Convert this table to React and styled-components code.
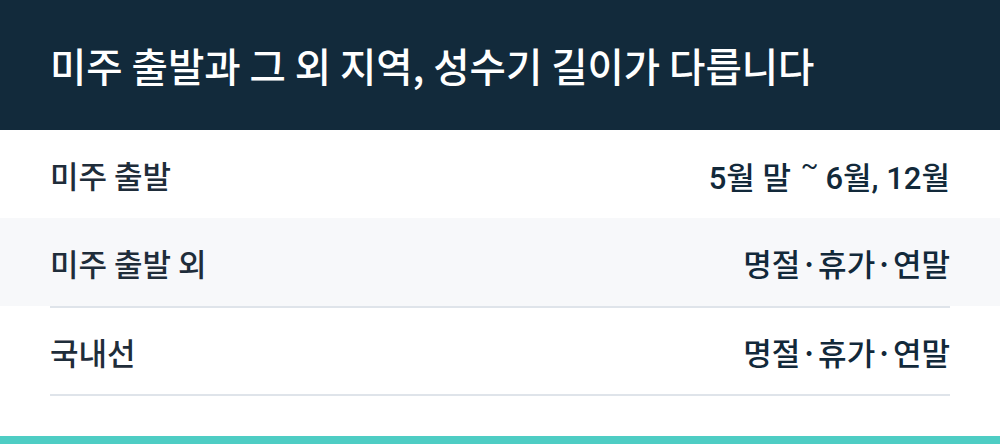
import React from "react";
import styled, { createGlobalStyle } from "styled-components";

const Global = createGlobalStyle`
  html, body { margin: 0; padding: 0; background: #ffffff; }
  body { font-family: "Noto Sans CJK KR", "Noto Sans", sans-serif; }
`;

const Page = styled.div`
  width: 1000px;
  height: 444px;
  display: flex;
  flex-direction: column;
  overflow: hidden;
  background: #ffffff;
`;

const Header = styled.header`
  height: 130px;
  background: #122a3b;
  display: flex;
  align-items: center;
  padding: 0 50px;
  box-sizing: border-box;
`;

const Title = styled.h1`
  margin: 0;
  color: #ffffff;
  font-size: 39.5px;
  font-weight: 500;
  line-height: 1;
`;

const Row = styled.div`
  height: ${(p) => p.$h}px;
  background: ${(p) => (p.$shade ? "#f7f8fa" : "#ffffff")};
  display: flex;
  align-items: center;
  justify-content: space-between;
  padding: 0 50px;
  box-sizing: border-box;
`;

const Label = styled.span`
  font-size: 31px;
  font-weight: 500;
  color: #1f2d3a;
`;

const Value = styled.span`
  font-size: 31px;
  font-weight: 500;
  color: #12293a;
  font-family: ${(p) =>
    p.$latin
      ? `Roboto, "Noto Sans CJK KR", sans-serif`
      : `"Noto Sans CJK KR", sans-serif`};
`;

const Tilde = styled.span`
  display: inline-block;
  font-size: 26px;
  font-weight: 400;
  vertical-align: 15px;
  margin: 0 7px 0 2px;
`;

const Divider = styled.div`
  height: 2px;
  margin: 0 50px;
  background: #dfe4ea;
`;

const Spacer = styled.div`
  flex: 1;
`;

const Accent = styled.div`
  height: 8px;
  background: #4ecdc4;
`;

export default function App() {
  return (
    <Page>
      <Global />
      <Header>
        <Title>미주 출발과 그 외 지역, 성수기 길이가 다릅니다</Title>
      </Header>
      <Row $h={88}>
        <Label>미주 출발</Label>
        <Value $latin>
          5월 말 <Tilde>~</Tilde>6월, 12월
        </Value>
      </Row>
      <Row $h={88} $shade>
        <Label>미주 출발 외</Label>
        <Value>명절·휴가·연말</Value>
      </Row>
      <Divider />
      <Row $h={86}>
        <Label>국내선</Label>
        <Value>명절·휴가·연말</Value>
      </Row>
      <Divider />
      <Spacer />
      <Accent />
    </Page>
  );
}
